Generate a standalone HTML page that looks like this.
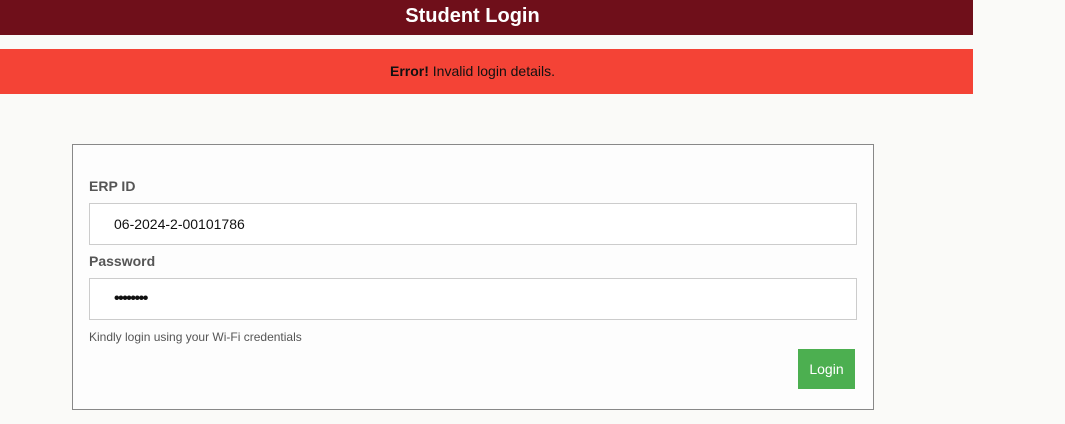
<!DOCTYPE html>
<html><head><style>
body{margin:0;width:1065px;height:424px;background:#fafaf8;font-family:"Liberation Sans",Arial,sans-serif;position:relative;overflow:hidden}
.hdr{position:absolute;left:0;top:0;width:945px;padding-right:28px;height:35px;background:#6f0f1a;color:#fff;font-weight:bold;font-size:20px;text-align:center;line-height:33px}
.err{position:absolute;left:0;top:49px;width:945px;padding-right:28px;height:45px;background:#f44336;color:#111;font-size:14px;text-align:center;line-height:45px}
.box{position:absolute;left:72px;top:144px;width:800px;height:264px;border:1px solid #888;background:#fdfdfd}
.lbl{position:absolute;left:16px;font-size:14px;font-weight:bold;color:#555}
.inp{position:absolute;left:16px;width:768px;height:42px;border:1px solid #ccc;background:#fff;font-size:14px;line-height:40px;box-sizing:border-box;padding-left:24px;color:#111}
.hint{position:absolute;left:16px;top:185px;font-size:12px;color:#555}
.btn{position:absolute;left:725px;top:204px;width:57px;height:40px;background:#4caf50;color:#fff;font-size:14px;text-align:center;line-height:40px}
</style></head><body>
<div class="hdr">Student Login</div>
<div class="err"><b>Error!</b> Invalid login details.</div>
<div class="box">
<div class="lbl" style="top:33px">ERP ID</div>
<div class="inp" style="top:58px">06-2024-2-00101786</div>
<div class="lbl" style="top:108px">Password</div>
<div class="inp" style="top:133px;font-size:16px;font-weight:bold;letter-spacing:-1.5px">••••••••</div>
<div class="hint">Kindly login using your Wi-Fi credentials</div>
<div class="btn">Login</div>
</div>
</body></html>
